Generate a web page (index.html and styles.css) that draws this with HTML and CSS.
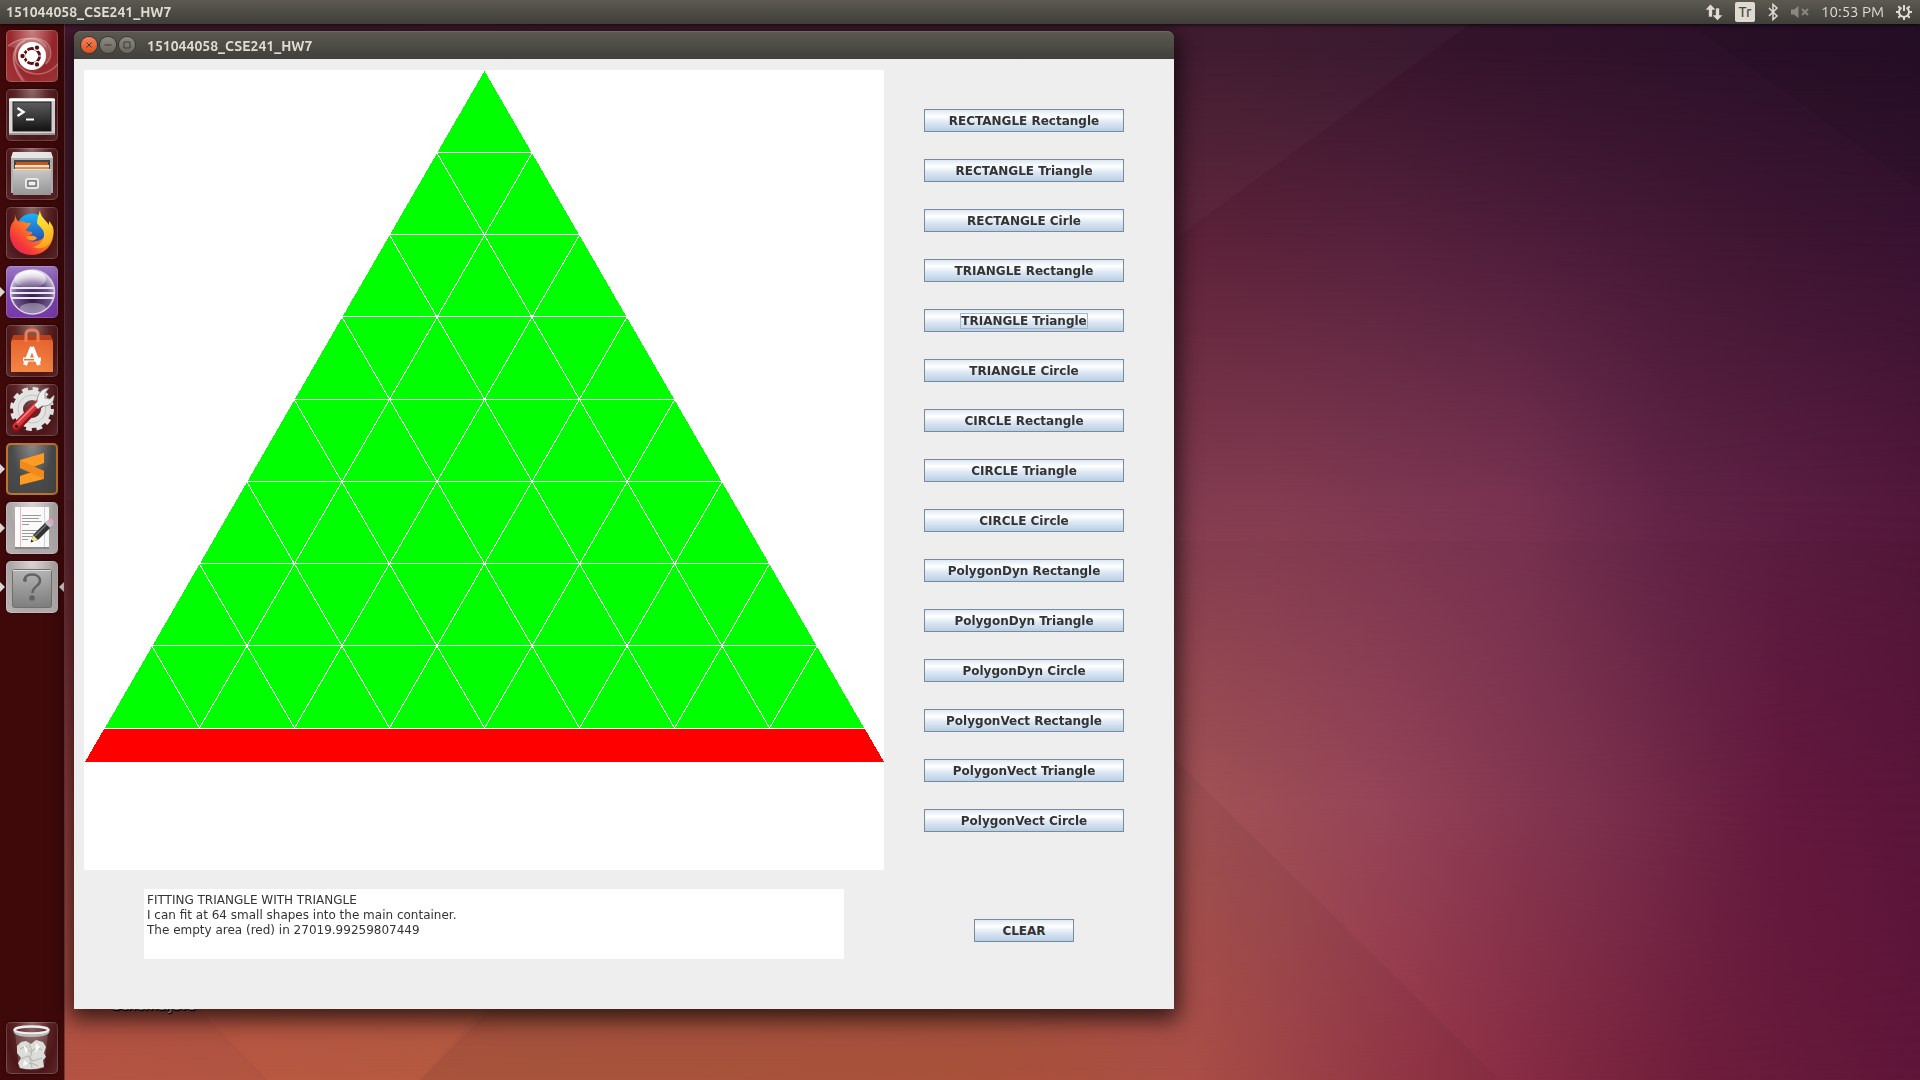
FILE: index.html
```html
<!DOCTYPE html>
<html lang="en">
<head>
<meta charset="utf-8">
<title>151044058_CSE241_HW7</title>
<link rel="stylesheet" href="styles.css">
</head>
<body>
<div class="wallpaper" aria-hidden="true">
  <div class="band band-1080"></div>
  <div class="band band-800"></div>
  <div class="band band-500"></div>
  <div class="band band-240"></div>
  <div class="band band-40"></div>
  <svg class="facets" viewBox="0 0 1920 1080" preserveAspectRatio="none">
    <path d="M64 24H1470L1180 235L800 500H64Z" fill="#fff" opacity=".022"/>
    <path d="M1690 24L1920 190V24Z" fill="#000" opacity=".05"/>
    <path d="M64 541H1920V1080H64Z" fill="#000" opacity=".02"/>
    <path d="M954 541L1500 1080H420L954 541Z" fill="#000" opacity=".04"/>
    <path d="M190 1000L268 1080H420L490 1000Z" fill="#ff7b50" opacity=".08"/>
  </svg>
</div>

<header class="panel">
  <span class="panel-title">151044058_CSE241_HW7</span>
  <div class="tray">
    <svg width="18" height="20" viewBox="0 0 18 20" fill="#dfdbd2"><path d="M5.500 2L11 8H7.500V15H3.500V8H0ZM12.500 18.500L7 13H10.500V6H14.500V13H18Z" stroke="#45443f" stroke-width=".6"/></svg>
    <span class="layout">Tr</span>
    <svg width="12" height="20" viewBox="0 0 12 20" fill="none" stroke="#dfdbd2" stroke-width="1.500"><path d="M2 6L10 14L6 17.500V2.500L10 6L2 14"/></svg>
    <svg width="18" height="20" viewBox="0 0 18 20"><path d="M0 7.500H3L7.500 4V16L3 12.500H0Z" fill="#8a8881"/><path d="M11 7L17 13M17 7L11 13" stroke="#8a8881" stroke-width="2"/></svg>
    <time class="clock">10:53 PM</time>
    <svg width="16" height="20" viewBox="0 0 16 20" fill="none" stroke="#dfdbd2"><path d="M5.500 5.600A5 5 0 1 0 10.500 5.600" stroke-width="2"/><path d="M8 3V9" stroke-width="2"/><path d="M0 10H3M13 10H16M2.300 4.300L4.500 6.500M13.700 4.300L11.500 6.500M2.300 15.700L4.500 13.500M13.700 15.700L11.500 13.500M8 15V18" stroke-width="2"/></svg>
  </div>
</header>

<div class="desktop">
  <nav class="launcher" aria-label="Launcher">
    <button class="tile tile-dash" aria-label="Search">
      <svg viewBox="0 0 52 52">
        <g fill="none" stroke="#fff" stroke-opacity=".28" stroke-width="1.500"><path d="M17 51C8 40 4 25 12 15C20 5 39 6 44 18C46 24 44 30 40 34"/><path d="M52 34C40 48 20 47 11 33C7 24 10 14 19 11"/><path d="M2 16C15 6 33 6 40 17"/></g>
        <path d="M2 16C15 4 38 5 44 19C46 25 43 32 39 35L38 20L14 17C8 25 9 38 20 51H17C8 41 3 28 9 18Z" fill="#fff" opacity=".14"/>
        <circle cx="26" cy="26" r="14" fill="#fff"/>
        <circle cx="26" cy="26" r="7.500" fill="none" stroke="#5d1114" stroke-width="3"/>
        <path d="M26 26L17 16M26 26L17 36M26 26L39 26" stroke="#fff" stroke-width="1.200"/><circle cx="26" cy="26" r="6" fill="#fff"/>
        <g stroke="#fff" stroke-width="1.200"><circle cx="16.500" cy="26" r="2.800" fill="#5d1114"/><circle cx="31" cy="17.600" r="2.800" fill="#5d1114"/><circle cx="31" cy="34.400" r="2.800" fill="#5d1114"/></g>
      </svg>
    </button>
    <button class="tile" aria-label="Terminal">
      <svg viewBox="0 0 52 52">
        <defs><linearGradient id="term" x2="0" y2="1"><stop stop-color="#5c5c5c"/><stop offset=".5" stop-color="#3a3a3a"/><stop offset="1" stop-color="#121212"/></linearGradient></defs>
        <rect x="3" y="9" width="46" height="37" rx="1.500" fill="#d9d9d9"/><path d="M3 10H49V12H3Z" fill="#fff"/><rect x="3" y="44" width="46" height="2" fill="#9b9b9b"/>
        <rect x="7" y="13" width="38" height="29" fill="url(#term)" stroke="#222"/>
        <path d="M11.500 19L17.500 23L11.500 27" fill="none" stroke="#fff" stroke-width="2.400"/><path d="M20 30.500H28" stroke="#fff" stroke-width="2"/>
      </svg>
    </button>
    <button class="tile" aria-label="Files">
      <svg viewBox="0 0 52 52">
        <defs><linearGradient id="cab" x2="0" y2="1"><stop stop-color="#c9c9c9"/><stop offset="1" stop-color="#969696"/></linearGradient></defs>
        <path d="M7 4H45L47 10V45H5V10Z" fill="#b0b0b0"/><path d="M7 4H45L47 10H5Z" fill="#e6e6e6"/>
        <rect x="8" y="12" width="36" height="11" fill="#444"/><path d="M10 14H42V22H10Z" fill="#c8571f"/><path d="M9 17H43V19H9Z" fill="#f8e8cf"/><path d="M9 19H43V23H9Z" fill="#ee8a46"/>
        <path d="M7 21H45V47H7Z" fill="url(#cab)"/><path d="M7 21H45V22H7Z" fill="#ddd"/>
        <rect x="20" y="31" width="12" height="9" rx="2" fill="none" stroke="#e8e8e8" stroke-width="2"/><rect x="22" y="33" width="8" height="5" fill="#eee" stroke="#555"/>
      </svg>
    </button>
    <button class="tile" aria-label="Firefox">
      <svg viewBox="0 0 52 52">
        <defs>
          <linearGradient id="fox" x1="1" x2="0" y2="1"><stop stop-color="#ffd22e"/><stop offset=".45" stop-color="#ff7b22"/><stop offset=".75" stop-color="#f4343c"/><stop offset="1" stop-color="#d81b7a"/></linearGradient>
          <linearGradient id="globe" x2="0" y2="1"><stop stop-color="#18b4fb"/><stop offset="1" stop-color="#2b3fa6"/></linearGradient>
          <linearGradient id="tail" x2="0" y2="1"><stop stop-color="#fff23c"/><stop offset="1" stop-color="#ffa41f"/></linearGradient>
        </defs>
        <circle cx="26" cy="22" r="15.500" fill="url(#globe)"/>
        <path d="M10 7C9 11 11 13 13 15C16 14 19 15 21 16L25 16C24 19 20 21 20 24L26 25C27 27 24 29 22 29C21 33 25 36 30 34C36 34 41 29 40 22C42 19 44 15 47 20C50 34 41 48 26 48C11 48 3 36 4 25C4 19 6 16 8 14Z" fill="url(#fox)"/>
        <path d="M34 3C33 8 31 11 31 16C33 20 39 22 38 29C37 35 32 39 27 40C41 45 49 33 47 21C46 17 44 15 43 14V18C40 13 34 10 34 3Z" fill="url(#tail)"/>
        <path d="M20 29C24 30 27 27 31 31C28 35 23 35 20 29Z" fill="#ff9a24"/>
      </svg>
    </button>
    <button class="tile tile-eclipse running" aria-label="Eclipse">
      <svg viewBox="0 0 52 52">
        <defs><radialGradient id="ecl" cx=".5" cy=".65" r=".6"><stop stop-color="#2d1746"/><stop offset=".65" stop-color="#6d548d"/><stop offset="1" stop-color="#d7cfe2"/></radialGradient><linearGradient id="ecl-glow" x2="0" y2="1"><stop stop-color="#fff" stop-opacity=".95"/><stop offset="1" stop-color="#fff" stop-opacity=".1"/></linearGradient></defs>
        <circle cx="26.500" cy="26" r="22" fill="url(#ecl)" stroke="#ddd6e6" stroke-width="1.500"/>
        <ellipse cx="24" cy="13" rx="16" ry="9" fill="url(#ecl-glow)"/><ellipse cx="27" cy="42" rx="13" ry="5" fill="#fff" opacity=".35"/>
        <path d="M5 22H48M4 27H49M5 32H48" stroke="#eee7f7" stroke-width="1.800"/>
      </svg>
    </button>
    <button class="tile" aria-label="Software Center">
      <svg viewBox="0 0 52 52">
        <defs><linearGradient id="bag" x2="0" y2="1"><stop stop-color="#e65f2d"/><stop offset="1" stop-color="#f38644"/></linearGradient></defs>
        <path d="M5 17L8 10H44L47 17V47H5Z" fill="url(#bag)"/><path d="M8 10H44L47 15H5Z" fill="#b9421b"/>
        <path d="M20 17V9Q20 5 26 5T32 9V17" fill="none" stroke="#e88058" stroke-width="3"/>
        <path d="M26 22L19 40M26 22L33 40" stroke="#fff" stroke-width="4"/><path d="M17 32.500H35V36.500H17Z" fill="#fff"/><path d="M18 34H28V35.500H18Z" fill="#ec6f36"/>
      </svg>
    </button>
    <button class="tile" aria-label="System Settings">
      <svg viewBox="0 0 52 52">
        <circle cx="26" cy="25" r="14" fill="none" stroke="#e3e3e3" stroke-width="10"/>
        <circle cx="26" cy="25" r="19.500" fill="none" stroke="#e3e3e3" stroke-width="5" stroke-dasharray="5.600 4.610"/>
        <circle cx="26" cy="25" r="14" fill="none" stroke="#c4c4c4" stroke-width="1"/>
        <path d="M10 43L34 19" stroke="#8e1216" stroke-width="9" stroke-linecap="round"/><path d="M10 42L33 18" stroke="#d8343a" stroke-width="6" stroke-linecap="round"/><path d="M11 39L31 19" stroke="#f08b8b" stroke-width="1.500"/>
        <path d="M31 18C31 10 36 4 43 4L39 9V14L44 15L48 11C49 18 43 23 36 22L32 25L28 21Z" fill="#eee" stroke="#888" stroke-width=".8"/>
        <circle cx="10.500" cy="42.500" r="1.800" fill="#5a0a0c"/>
      </svg>
    </button>
    <button class="tile tile-sublime running" aria-label="Sublime Text">
      <svg viewBox="0 0 52 52"><path d="M14 17L38 10V20L27 24L38 28V36L14 42V33L26 29L14 25Z" fill="#ff9a22"/><path d="M14 17V25L38 36V28Z" fill="#f08b1b"/></svg>
    </button>
    <button class="tile tile-light running" aria-label="Text Editor">
      <svg viewBox="0 0 52 52">
        <rect x="9" y="6" width="34" height="41" fill="#8a8586"/><rect x="9" y="5" width="34" height="40" fill="#fafafa"/>
        <path d="M14.500 5V45" stroke="#f3b9b9"/><path d="M38.500 5V45" stroke="#c7d4ee"/>
        <path d="M16 13.500H35M16 16.500H33M16 19.500H36M16 22.500H23M16 28.500H34M16 31.500H28M16 34.500H30M16 37.500H22" stroke="#9a9a9a"/>
        <path d="M25 40L27 33L41 19L46 24L32 38Z" fill="#333"/><path d="M29 34L42 21" stroke="#777" stroke-width="1.500"/><path d="M25 40L27 33L32 38Z" fill="#f2e59a"/><path d="M24.500 40.500L25.500 37.500L27.500 39.500Z" fill="#222"/>
        <path d="M39 21L42 18L47 23L44 26Z" fill="#c9c9c9"/><path d="M41.500 18.500L43 17Q46 16 47.500 18.500Q48.500 21 46.500 23Z" fill="#e9a6cf"/>
      </svg>
    </button>
    <button class="tile tile-light running focused" aria-label="151044058_CSE241_HW7">
      <svg viewBox="0 0 52 52">
        <defs><linearGradient id="unk" x2="0" y2="1"><stop stop-color="#b5b5b5"/><stop offset="1" stop-color="#7e7e7e"/></linearGradient></defs>
        <rect x="6.500" y="8.500" width="39" height="38" rx="2" fill="url(#unk)" stroke="#707070"/><path d="M7 9.500H45" stroke="#ddd"/>
        <path d="M18.500 19C19 15 22 13.500 26 13.500C31 13.500 34 16 34 20C34 25 26.500 25 26.500 32" fill="none" stroke="#626262" stroke-width="2.500"/><circle cx="26" cy="37" r="2.800" fill="#626262"/><circle cx="19" cy="19" r="2" fill="#626262"/>
      </svg>
    </button>
    <button class="tile tile-trash" aria-label="Trash">
      <svg viewBox="0 0 52 52">
        <path d="M9 11L13 46Q26 50 38 46L42 11Z" fill="#fff" opacity=".16"/>
        <path d="M11 24L15 20L20 19L25 22L30 18L37 20L40 25L38 31L40 35L37 38L38 45Q26 49 14 46L12 41L15 36L11 31Z" fill="#dcdcd8"/>
        <path d="M14 27L20 24L24 30L31 26L36 28M15 37L22 34L27 39L36 36M19 43L25 41L32 44M23 22L26 29L24 36L26 46" fill="none" stroke="#b9b8b3" stroke-width="1.200"/><path d="M17 22L22 27L20 32ZM30 21L34 25L29 31ZM18 38L23 42L17 44Z" fill="#f8f8f6"/>
        <ellipse cx="25.500" cy="8" rx="17" ry="3.500" fill="none" stroke="#eee" stroke-width="2.500"/><path d="M7.500 8Q9 12 25.500 12.500T43.500 8L43 11Q40 15 25.500 15T8 11Z" fill="#b9b9b9"/>
      </svg>
    </button>
  </nav>

  <main class="workspace">
    <span class="desktop-file">Schema.java</span>
    <section class="window">
      <div class="titlebar">
        <button class="wm wm-close" aria-label="Close"><svg viewBox="0 0 16 16"><path d="M5.500 5.500L10.500 10.500M10.500 5.500L5.500 10.500"/></svg></button>
        <button class="wm" aria-label="Minimize"><svg viewBox="0 0 16 16"><path d="M4.500 8H11.500"/></svg></button>
        <button class="wm" aria-label="Maximize"><svg viewBox="0 0 16 16"><path d="M5 5H11V11H5Z"/></svg></button>
        <h1 class="window-title">151044058_CSE241_HW7</h1>
      </div>
      <div class="window-body">
        <svg class="canvas" viewBox="0 0 800 800" shape-rendering="crispEdges" role="img" aria-label="Large triangle filled with 64 small triangles">
          <path d="M20 659H781L800 692H1Z" fill="#f00"/>
          <path d="M400.500 1L780 658H21Z" fill="#0f0"/>
          <path d="M353 82.500H448M305 164.500H496M258 246.500H543M210 329.500H591M163 411.500H638M115 493.500H686M68 575.500H733M20 658.500H781
            M353 83L685.500 658M305.500 165L590.500 658M258 247L495.500 658M210.500 330L400.500 658M163 412L305.500 658M115.500 494L210.500 658M68 576L115.500 658
            M448 83L115.500 658M495.500 165L210.500 658M543 247L305.500 658M590.500 330L400.500 658M638 412L495.500 658M685.500 494L590.500 658M733 576L685.500 658" fill="none" stroke="#fff"/>
        </svg>
        <div class="actions">
          <button class="swing">RECTANGLE Rectangle</button>
          <button class="swing">RECTANGLE Triangle</button>
          <button class="swing">RECTANGLE Cirle</button>
          <button class="swing">TRIANGLE Rectangle</button>
          <button class="swing"><span class="focus-ring">TRIANGLE Triangle</span></button>
          <button class="swing">TRIANGLE Circle</button>
          <button class="swing">CIRCLE Rectangle</button>
          <button class="swing">CIRCLE Triangle</button>
          <button class="swing">CIRCLE Circle</button>
          <button class="swing">PolygonDyn Rectangle</button>
          <button class="swing">PolygonDyn Triangle</button>
          <button class="swing">PolygonDyn Circle</button>
          <button class="swing">PolygonVect Rectangle</button>
          <button class="swing">PolygonVect Triangle</button>
          <button class="swing">PolygonVect Circle</button>
        </div>
        <textarea class="output" aria-label="Result" readonly>FITTING TRIANGLE WITH TRIANGLE
I can fit at 64 small shapes into the main container.
The empty area (red) in 27019.99259807449</textarea>
        <button class="swing swing-clear">CLEAR</button>
      </div>
    </section>
  </main>
</div>
</body>
</html>
```
FILE: styles.css
```css
* { box-sizing: border-box; }

body {
  margin: 0;
  min-height: 100vh;
  display: flex;
  flex-direction: column;
  background: #5b2138;
  font-family: Ubuntu, "Open Sans", "Noto Sans", sans-serif;
}

button { margin: 0; padding: 0; border: 0; font: inherit; }

/* Wallpaper: horizontal colour ramps, each fading into the one below it */
.wallpaper { position: fixed; inset: 0; z-index: -1; }
.band, .facets { position: absolute; inset: 0; width: 100%; height: 100%; }
.band-1080 { background: linear-gradient(90deg, #b95645 4%, #b25a40 28%, #b4573f 52%, #b6544b 62%, #a2414b 70%, #8b2d46 79%, #721f3d 88%, #60163b 100%); }
.band-800 { background: linear-gradient(90deg, #a04440 4%, #a0504a 50%, #a45356 63%, #98465a 72%, #7c304d 84%, #65193f 93%, #5c163b 100%);
  mask: linear-gradient(#000 74%, transparent 100%); }
.band-500 { background: linear-gradient(90deg, #6a2a38 3%, #7f3a4c 50%, #823b50 66%, #773250 79%, #602346 87%, #51173a 100%);
  mask: linear-gradient(#000 46%, transparent 74%); }
.band-240 { background: linear-gradient(90deg, #4c1a2e 3%, #5c2238 62%, #56213c 72%, #4a1b38 82%, #3d1531 93%, #381230 100%);
  mask: linear-gradient(#000 22%, transparent 46%); }
.band-40 { background: linear-gradient(90deg, #42162c 3%, #3c172c 64%, #33132a 77%, #2a1029 92%, #260f27 100%);
  mask: linear-gradient(#000 4%, transparent 22%); }

/* Top panel */
.panel {
  display: flex;
  align-items: center;
  justify-content: space-between;
  height: 24px;
  padding: 0 8px 0 6px;
  background: linear-gradient(#5c5a50, #3f3e39);
  box-shadow: 0 1px 4px rgba(0, 0, 0, .7);
  color: #dfdbd2;
  font-size: 14px;
  line-height: 24px;
  z-index: 1;
}
.panel-title { font-weight: 700; }
.tray { display: flex; align-items: center; gap: 12px; }
.clock { font-size: 15px; }
.layout {
  width: 20px;
  height: 20px;
  border-radius: 2px;
  background: #dfdbd2;
  color: #4a4943;
  font-size: 14px;
  font-weight: 500;
  line-height: 20px;
  text-align: center;
}

.desktop { flex: 1; display: flex; }

/* Launcher */
.launcher {
  display: flex;
  flex-direction: column;
  gap: 7px;
  width: 65px;
  padding: 6px;
  background: #3f090a;
  border-right: 1px solid #70393f;
}
.tile {
  position: relative;
  width: 52px;
  height: 52px;
  border-radius: 5px;
  background: radial-gradient(ellipse at 50% 0, #8f6969, #5a2527 45%, #4d1719 70%, #5b2b2d);
  box-shadow: inset 0 0 0 1px rgba(255, 255, 255, .18), 0 0 3px rgba(0, 0, 0, .5);
}
.tile svg { display: block; width: 52px; height: 52px; }
.tile-dash { background: radial-gradient(ellipse at 50% 0, #c98080, #98272b 60%, #a3383b); }
.tile-eclipse { background: linear-gradient(#9c78c4, #8046ae 50%, #7739a6); }
.tile-sublime { background: radial-gradient(ellipse at 50% 0, #8b8b8b, #4a4a4a 55%, #444); box-shadow: inset 0 0 0 2px #b8762f; }
.tile-light { background: radial-gradient(ellipse at 50% 0, #d9d4d4, #aca5a5 60%, #b9b2b2); }
.tile-trash { margin-top: auto; }
.running::before, .focused::after {
  content: "";
  position: absolute;
  top: 21px;
  border: 5px solid transparent;
}
.running::before { left: -6px; border-left-color: #dcd6d2; border-right-width: 0; }
.focused::after { right: -6px; border-right-color: #dcd6d2; border-left-width: 0; }

/* Workspace and the application window */
.workspace { position: relative; flex: 1; min-width: 0; padding: 7px 9px; }
.desktop-file {
  position: absolute;
  left: 48px;
  top: 971px;
  color: #fff;
  font-size: 15px;
  line-height: 20px;
  text-shadow: 0 1px 1px #000, 1px 1px 1px #000;
}
.window {
  position: relative;
  width: 100%;
  max-width: 1100px;
  border-radius: 7px 7px 0 0;
  box-shadow: 0 6px 22px 4px rgba(0, 0, 0, .7);
}
.titlebar {
  display: flex;
  align-items: center;
  gap: 3px;
  height: 28px;
  padding: 0 7px;
  border-radius: 7px 7px 0 0;
  background: linear-gradient(#5b5950, #403f3a);
  box-shadow: inset 0 1px 0 #6c6a60;
}
.wm {
  width: 16px;
  height: 16px;
  border-radius: 50%;
  background: linear-gradient(#8b8981, #68665f);
  box-shadow: 0 0 0 1px #37362f;
}
.wm-close { background: linear-gradient(#f7835b, #e2501f); }
.wm svg { display: block; fill: none; stroke: #3b3a35; stroke-width: 1; }
.window-title {
  margin: 0 0 0 9px;
  padding-top: 2px;
  color: #dfdbd2;
  font-size: 14px;
  font-weight: 700;
  line-height: 26px;
}
.window-body {
  display: grid;
  grid-template-columns: minmax(0, 1fr) 200px;
  column-gap: 40px;
  row-gap: 19px;
  padding: 11px 50px 50px 10px;
  background: #eee;
}
.canvas { display: block; width: 100%; background: #fff; }
.actions { display: flex; flex-direction: column; gap: 27px; padding-top: 39px; }

.swing {
  display: flex;
  align-items: center;
  justify-content: center;
  height: 23px;
  padding-top: 1px;
  border: 1px solid #7a8a99;
  background: linear-gradient(#dde8f3, #fff 30%, #dce7f3 60%, #b8cfe5);
  color: #333;
  font: 700 12px/14px "DejaVu Sans", sans-serif;
}
.swing-clear { width: 100px; justify-self: center; margin-top: 30px; }
.focus-ring { outline: 1px solid #a3b8cc; }

.output {
  height: 70px;
  margin: 0 40px 0 60px;
  padding: 4px 3px 3px;
  border: 0;
  resize: none;
  background: #fff;
  color: #333;
  font: 12px/15px "DejaVu Sans", sans-serif;
}
```
